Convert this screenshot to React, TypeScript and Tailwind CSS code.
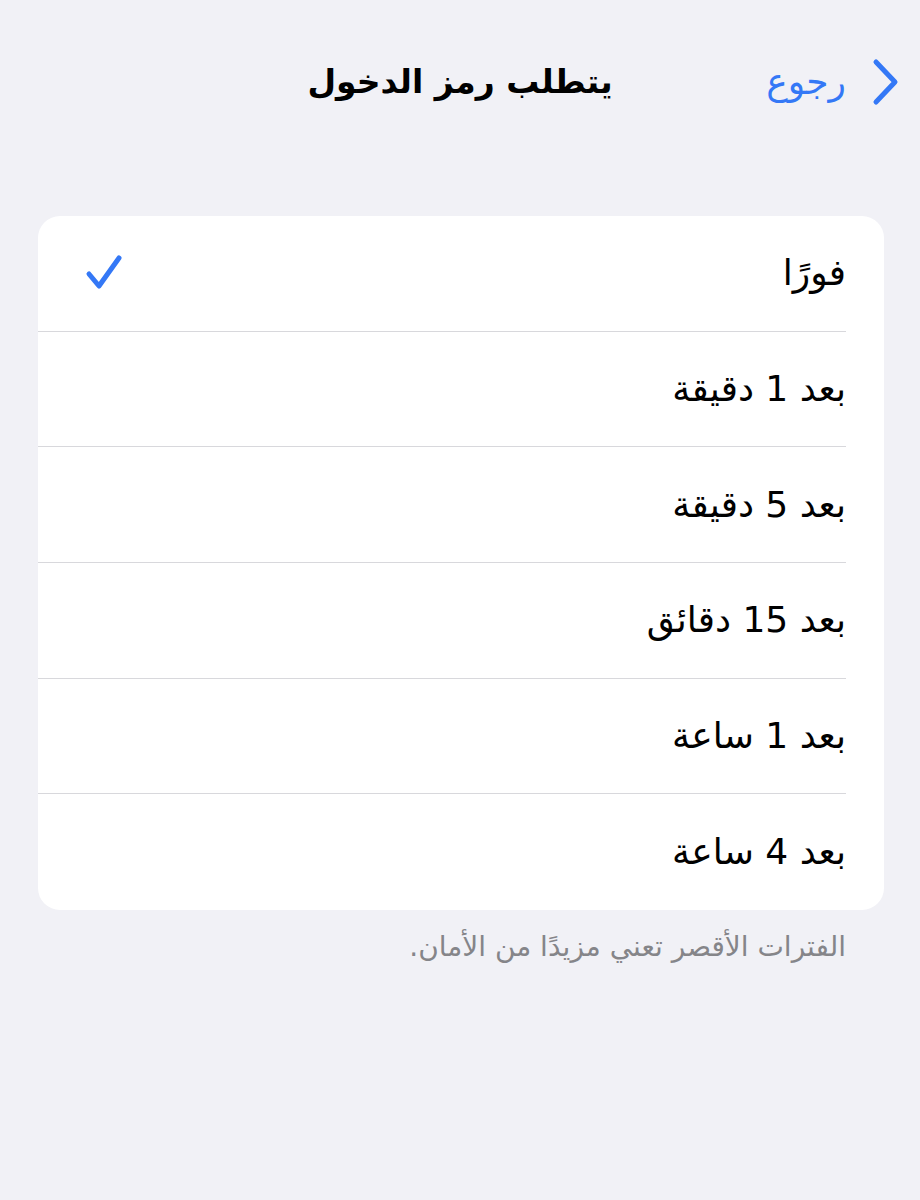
import React from "react";

const options = ["فورًا", "بعد 1 دقيقة", "بعد 5 دقيقة", "بعد 15 دقائق", "بعد 1 ساعة", "بعد 4 ساعة"];

const Check: React.FC = () => (
  <svg width="40" height="40" viewBox="0 0 40 40" fill="none" className="block">
    <path d="M4 21 L14 33 L34 5" stroke="#3478f6" strokeWidth="5" strokeLinecap="round" strokeLinejoin="round" />
  </svg>
);

const Chevron: React.FC = () => (
  <svg width="32" height="48" viewBox="0 0 32 48" fill="none" className="block">
    <path d="M8 4 L27 24 L8 44" stroke="#3478f6" strokeWidth="5" strokeLinecap="round" strokeLinejoin="round" />
  </svg>
);

export default function App() {
  const selected = 0;

  return (
    <div
      dir="rtl"
      className="w-[920px] h-[1200px] bg-[#f1f1f6] text-black"
      style={{ fontFamily: '"DejaVu Sans", "Noto Sans", sans-serif' }}
    >
      {/* Nav bar */}
      <header className="relative h-[216px] pt-[58px]">
        <div className="flex items-center h-[48px] pr-[20px]">
          <Chevron />
          <span className="mr-[22px] text-[36px] text-[#3478f6] leading-none">رجوع</span>
        </div>
        <h1 className="absolute top-[60px] left-0 right-0 text-center text-[33px] font-bold leading-[44px]">
          يتطلب رمز الدخول
        </h1>
      </header>

      {/* Options */}
      <div className="ml-[38px] mr-[36px] bg-white rounded-[22px] overflow-hidden">
        {options.map((label, i) => (
          <div key={label} className="pr-[38px]">
            <div
              className={`flex items-center justify-between h-[115.7px] pl-[47px] ${
                i < options.length - 1 ? "border-b border-[#d8d8dc]" : ""
              }`}
            >
              <span className="text-[36px] leading-none">{label}</span>
              {i === selected && <Check />}
            </div>
          </div>
        ))}
      </div>

      <p className="mt-[16px] pr-[74px] text-[28px] text-[#858589]">الفترات الأقصر تعني مزيدًا من الأمان.</p>
    </div>
  );
}
